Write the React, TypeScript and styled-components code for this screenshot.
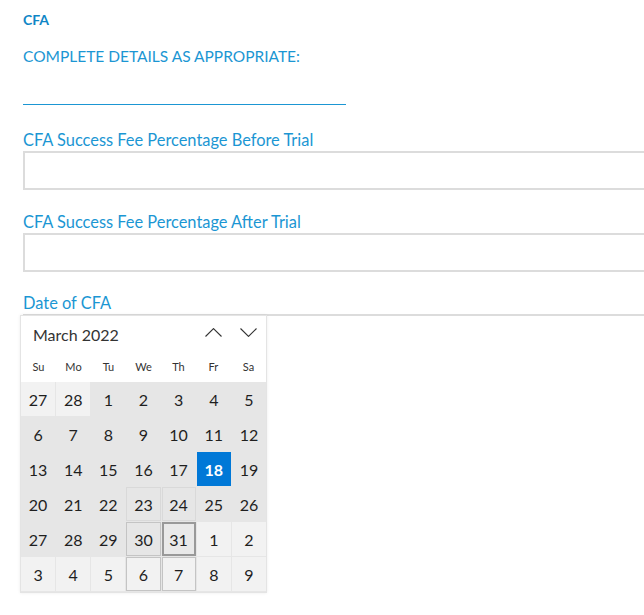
import React from 'react';
import styled, { createGlobalStyle, css } from 'styled-components';

const GlobalStyle = createGlobalStyle`
  html, body { margin: 0; padding: 0; background: #ffffff; }
  body { font-family: Lato, "Open Sans", sans-serif; overflow: hidden; }
`;

const Page = styled.div`
  width: 644px;
  height: 615px;
  overflow: hidden;
  box-sizing: border-box;
  padding: 12px 0 0 23px;
  display: flex;
  flex-direction: column;
  & > * {
    flex-shrink: 0;
  }
`;

const SectionTitle = styled.div`
  font-size: 14px;
  font-weight: 700;
  line-height: 16px;
  color: #0f86c6;
`;

const Instruction = styled.div`
  margin-top: 18px;
  font-size: 15.5px;
  line-height: 20px;
  color: #1b96d3;
`;

const Rule = styled.div`
  margin-top: 38px;
  width: 323px;
  height: 1px;
  background: #1b96d3;
`;

const Field = styled.div<{ $gap: number }>`
  display: flex;
  flex-direction: column;
  margin-top: ${(p) => p.$gap}px;
  & > * {
    flex-shrink: 0;
  }
`;

const Label = styled.label`
  font-size: 16.4px;
  line-height: 20px;
  color: #1b96d3;
`;

const TextBox = styled.div`
  margin-top: 1px;
  width: 640px;
  height: 39px;
  box-sizing: border-box;
  border: 2px solid #dcdcdc;
  background: #fff;
`;

const DateBox = styled.div`
  position: relative;
  margin-top: 1px;
  width: 640px;
  height: 285px;
  box-sizing: border-box;
  border-top: 2px solid #dcdcdc;
`;

const Popup = styled.div`
  position: absolute;
  left: -3px;
  top: -1px;
  width: 247px;
  box-sizing: border-box;
  background: #fff;
  border: 1px solid #e4e4e4;
  box-shadow: 0 0 3px rgba(0, 0, 0, 0.08);
  display: flex;
  flex-direction: column;
`;

const CalHeader = styled.div`
  display: flex;
  align-items: center;
  height: 33px;
  padding-left: 12px;
`;

const Month = styled.div`
  flex: 1;
  font-size: 16px;
  color: #333;
  padding-top: 3px;
`;

const NavButton = styled.button`
  width: 35px;
  height: 33px;
  padding: 0;
  border: none;
  background: transparent;
  display: flex;
  align-items: center;
  justify-content: center;
  color: #333;
`;

const WeekRow = styled.div`
  display: grid;
  grid-template-columns: repeat(7, 1fr);
  height: 33px;
  align-items: center;
`;

const WeekDay = styled.div`
  text-align: center;
  font-size: 11px;
  color: #333;
  padding-top: 2px;
`;

const DayGrid = styled.div`
  display: grid;
  grid-template-columns: repeat(7, 1fr);
  grid-auto-rows: 34px;
  gap: 1px;
  padding-bottom: 1px;
  background: #e6e6e6;
`;

type Reveal = 'none' | 'faint' | 'soft' | 'strong';

const Day = styled.div<{ $out?: boolean; $today?: boolean; $reveal: Reveal }>`
  display: flex;
  align-items: center;
  justify-content: center;
  box-sizing: border-box;
  font-size: 16px;
  color: #1f1f1f;
  background: ${(p) => (p.$out ? '#f2f2f2' : 'transparent')};
  border: 1px solid transparent;
  ${(p) =>
    p.$reveal === 'faint' &&
    css`
      border-color: #d9d9d9;
    `}
  ${(p) =>
    p.$reveal === 'soft' &&
    css`
      border-color: #c4c4c4;
    `}
  ${(p) =>
    p.$reveal === 'strong' &&
    css`
      border: 2px solid #999999;
      background: #e9e9e9;
    `}
  ${(p) =>
    p.$today &&
    css`
      background: #0078d7;
      color: #ffffff;
      font-weight: 700;
    `}
`;

const Chevron = ({ up }: { up?: boolean }) => (
  <svg width="17" height="9" viewBox="0 0 17 9" fill="none" stroke="currentColor" strokeWidth="1.1">
    {up ? <polyline points="0.5,8.5 8.5,0.6 16.5,8.5" /> : <polyline points="0.5,0.5 8.5,8.4 16.5,0.5" />}
  </svg>
);

type Cell = { n: number; out?: boolean; today?: boolean; reveal?: Reveal };

const weeks: Cell[][] = [
  [{ n: 27, out: true }, { n: 28, out: true }, { n: 1 }, { n: 2 }, { n: 3 }, { n: 4 }, { n: 5 }],
  [{ n: 6 }, { n: 7 }, { n: 8 }, { n: 9 }, { n: 10 }, { n: 11 }, { n: 12 }],
  [{ n: 13 }, { n: 14 }, { n: 15 }, { n: 16 }, { n: 17 }, { n: 18, today: true }, { n: 19 }],
  [{ n: 20 }, { n: 21 }, { n: 22 }, { n: 23, reveal: 'faint' }, { n: 24, reveal: 'faint' }, { n: 25 }, { n: 26 }],
  [{ n: 27 }, { n: 28 }, { n: 29 }, { n: 30, reveal: 'soft' }, { n: 31, reveal: 'strong' }, { n: 1, out: true }, { n: 2, out: true }],
  [
    { n: 3, out: true },
    { n: 4, out: true },
    { n: 5, out: true },
    { n: 6, out: true, reveal: 'soft' },
    { n: 7, out: true, reveal: 'soft' },
    { n: 8, out: true },
    { n: 9, out: true },
  ],
];

const weekDays = ['Su', 'Mo', 'Tu', 'We', 'Th', 'Fr', 'Sa'];

export default function App() {
  return (
    <>
      <GlobalStyle />
      <Page>
        <SectionTitle>CFA</SectionTitle>
        <Instruction>COMPLETE DETAILS AS APPROPRIATE:</Instruction>
        <Rule />
        <Field $gap={25}>
          <Label>CFA Success Fee Percentage Before Trial</Label>
          <TextBox />
        </Field>
        <Field $gap={21.5}>
          <Label>CFA Success Fee Percentage After Trial</Label>
          <TextBox />
        </Field>
        <Field $gap={21.5}>
          <Label>Date of CFA</Label>
          <DateBox>
            <Popup>
              <CalHeader>
                <Month>March 2022</Month>
                <NavButton aria-label="Previous">
                  <Chevron up />
                </NavButton>
                <NavButton aria-label="Next">
                  <Chevron />
                </NavButton>
              </CalHeader>
              <WeekRow>
                {weekDays.map((d) => (
                  <WeekDay key={d}>{d}</WeekDay>
                ))}
              </WeekRow>
              <DayGrid>
                {weeks.flat().map((c, i) => (
                  <Day key={i} $out={c.out} $today={c.today} $reveal={c.reveal ?? 'none'}>
                    {c.n}
                  </Day>
                ))}
              </DayGrid>
            </Popup>
          </DateBox>
        </Field>
      </Page>
    </>
  );
}
